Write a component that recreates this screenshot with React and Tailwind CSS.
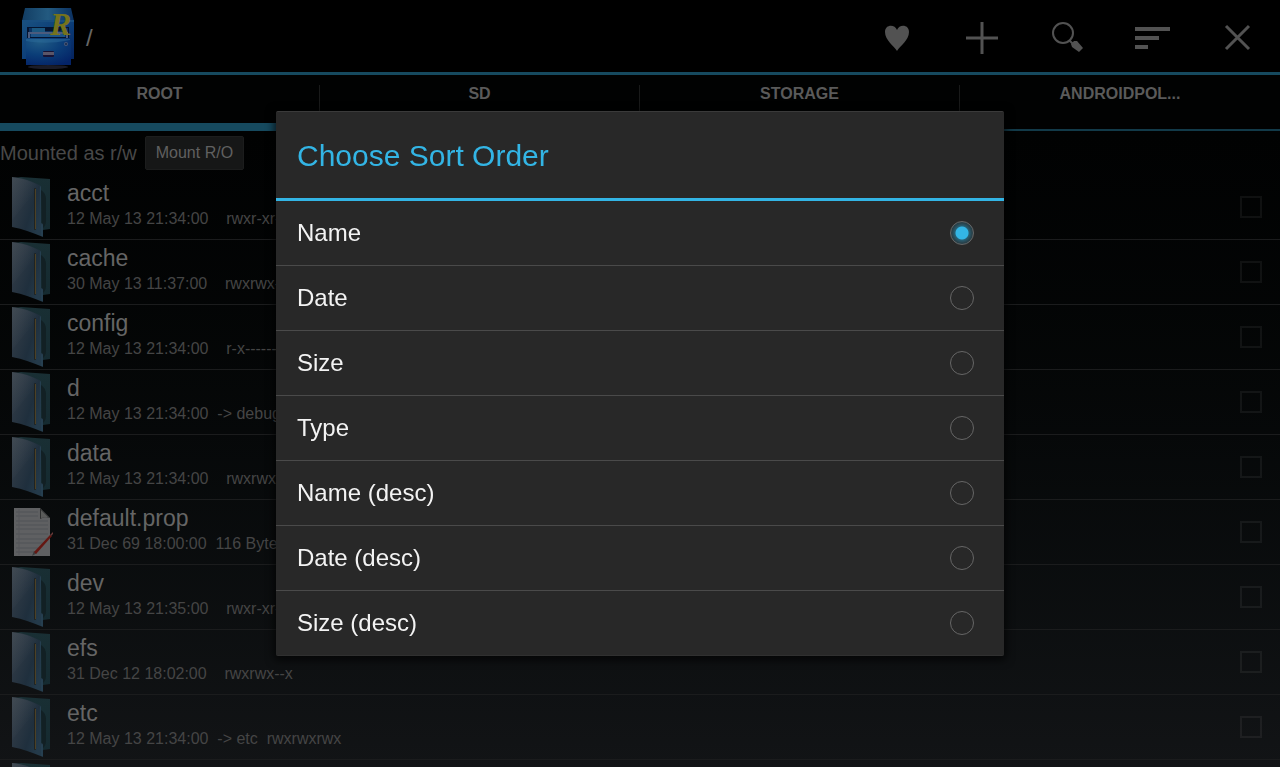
import { useState } from 'react';

const TABS = ['ROOT', 'SD', 'STORAGE', 'ANDROIDPOL...'];

const FILES = [
  { name: 'acct', info: '12 May 13 21:34:00    rwxr-xr-x' },
  { name: 'cache', info: '30 May 13 11:37:00    rwxrwx---' },
  { name: 'config', info: '12 May 13 21:34:00    r-x------' },
  { name: 'd', info: '12 May 13 21:34:00  -> debug' },
  { name: 'data', info: '12 May 13 21:34:00    rwxrwx--x' },
  { name: 'default.prop', info: '31 Dec 69 18:00:00  116 Bytes', isFile: true },
  { name: 'dev', info: '12 May 13 21:35:00    rwxr-xr-x' },
  { name: 'efs', info: '31 Dec 12 18:02:00    rwxrwx--x' },
  { name: 'etc', info: '12 May 13 21:34:00  -> etc  rwxrwxrwx' },
];

const SORT_OPTIONS = ['Name', 'Date', 'Size', 'Type', 'Name (desc)', 'Date (desc)', 'Size (desc)'];

function Logo() {
  return (
    <svg width="56" height="64" viewBox="0 0 56 64" className="shrink-0" aria-hidden="true">
      <defs>
        <linearGradient id="cab" x1="0" y1="0" x2="1" y2="1">
          <stop offset="0" stopColor="#1a5180" />
          <stop offset="0.5" stopColor="#0b3d78" />
          <stop offset="1" stopColor="#041f5a" />
        </linearGradient>
        <linearGradient id="cabTop" x1="0" y1="0" x2="1" y2="0">
          <stop offset="0" stopColor="#123d63" />
          <stop offset="0.5" stopColor="#235a80" />
          <stop offset="1" stopColor="#0b3060" />
        </linearGradient>
        <radialGradient id="drawer" cx="0.3" cy="0.1" r="1">
          <stop offset="0" stopColor="#205b85" />
          <stop offset="0.5" stopColor="#0b3e78" />
          <stop offset="1" stopColor="#042367" />
        </radialGradient>
      </defs>
      <ellipse cx="28" cy="61" rx="20" ry="2" fill="#1b1c28" />
      <path d="M5 2h46l3 13H2z" fill="url(#cabTop)" />
      <path d="M2 14h52v39h-3v6H6v-6H2z" fill="url(#cab)" />
      <path d="M2 14h52v2H2z" fill="#184e80" />
      <path d="M7 21h42v11H7z" fill="#05142f" />
      <path d="M9 22h5l2 3h24l3-3h5v9H9z" fill="#0a3263" />
      <path d="M12 22h13v4H12z" fill="#1b5780" />
      <path d="M8 26h40v6h-2v-4H10v4H8z" fill="#4b5b7d" />
      <path d="M11 28h34v3H11z" fill="#1d5386" />
      <path d="M6 33h44l1 3v23H6z" fill="url(#drawer)" />
      <path d="M6 35c12 2 24 3 44-1v-1H6z" fill="#2b6b9b" opacity="0.5" />
      <rect x="23" y="45" width="11" height="6" rx="1" fill="#171335" />
      <path d="M23 46h11v3H23z" fill="#5a5568" />
      <circle cx="46" cy="38" r="2" fill="#485776" />
      <circle cx="46" cy="38" r="1" fill="#16284a" />
      <text
        x="30"
        y="29"
        fontFamily="'Liberation Serif', serif"
        fontSize="32"
        fontWeight="bold"
        fontStyle="italic"
        fill="#76731c"
      >
        R
      </text>
    </svg>
  );
}

function FolderIcon() {
  return (
    <svg width="40" height="62" viewBox="0 0 40 62" className="shrink-0" aria-hidden="true">
      <defs>
        <linearGradient id="cover" x1="0" y1="0" x2="1" y2="0.6">
          <stop offset="0" stopColor="#343d46" />
          <stop offset="0.35" stopColor="#2b3743" />
          <stop offset="0.7" stopColor="#1f2f3d" />
          <stop offset="1" stopColor="#243a4a" />
        </linearGradient>
        <linearGradient id="back" x1="0" y1="0" x2="0" y2="1">
          <stop offset="0" stopColor="#192f34" />
          <stop offset="1" stopColor="#152a30" />
        </linearGradient>
        <linearGradient id="shine" x1="0" y1="0" x2="1" y2="1">
          <stop offset="0" stopColor="#59636b" stopOpacity="0.35" />
          <stop offset="0.6" stopColor="#59636b" stopOpacity="0" />
        </linearGradient>
      </defs>
      <path d="M2 2l8-1 29 2v50l-7 1-20-6z" fill="url(#back)" />
      <path d="M30 14c3 2 5 5 5 9v22c0 4-2 6-4 8z" fill="#122024" />
      <path d="M1 1c11 1 20 4 29 9v37l2 1v13C22 57 12 53 1 51z" fill="url(#cover)" />
      <path d="M1 1c10 1 19 4 28 9L1 44z" fill="url(#shine)" />
      <path d="M29 10l1 1v37l2 1v11h-2z" fill="#263f50" />
      <rect x="23" y="12" width="2" height="42" rx="1" fill="#1f2322" />
      <path d="M24 13h1v40h-1z" fill="#4c4126" />
    </svg>
  );
}

function TextFileIcon() {
  return (
    <svg width="40" height="62" viewBox="0 0 40 62" className="shrink-0" aria-hidden="true" overflow="visible">
      <path d="M3 7h26l10 10v38H3z" fill="#5f6062" />
      <path
        d="M5 11h22M5 15h22M5 20h32M5 24h32M5 28h32M5 33h32M5 38h32M5 42h28M5 47h22M5 51h18"
        stroke="#515257"
      />
      <path d="M8 8v46" stroke="#56575a" />
      <path d="M29 7l10 10c-3-1-6-1-10 1z" fill="#2d2e2e" />
      <path d="M30 9l7 7-7 1z" fill="#5a5b5a" />
      <path d="M21 55l2-5 3 2z" fill="#3c3c3e" />
      <path d="M23 51l16-17 2 1-16 18z" fill="#651712" />
      <path d="M39 34l3-3v2l-2 2z" fill="#6a3a38" />
    </svg>
  );
}

const ACTIONS = [
  {
    label: 'Favourites',
    icon: <path d="M20 33C17 28 8 22 8 14c0-8 10-8 12-2 2-6 12-6 12 2 0 8-9 14-12 19z" fill="#525252" />,
  },
  {
    label: 'Add',
    icon: <path d="M20 4v32M4 20h32" stroke="#525252" strokeWidth="3" />,
  },
  {
    label: 'Search',
    icon: (
      <>
        <circle cx="16" cy="15" r="10" fill="none" stroke="#525252" strokeWidth="2" />
        <path d="M22 22l4 4" stroke="#525252" strokeWidth="2" />
        <path d="M24 26l3-3 3 0 6 7-4 4-7-5z" fill="#525252" />
      </>
    ),
  },
  {
    label: 'Sort',
    icon: <path d="M3 11h35M3 20h24M3 29h13" stroke="#525252" strokeWidth="4" />,
  },
  {
    label: 'Close',
    icon: <path d="M9 8l23 23M32 8L9 31" stroke="#525252" strokeWidth="3" />,
  },
];

function Header() {
  return (
    <header className="flex h-[75px] shrink-0 items-center border-b-[3px] border-[#164a5f] bg-black">
      <div className="flex flex-1 items-center pt-1 pl-5">
        <Logo />
        <span className="pl-2.5 text-2xl text-[#666]">/</span>
      </div>
      {ACTIONS.map(({ label, icon }) => (
        <button
          key={label}
          type="button"
          aria-label={label}
          className="flex h-full w-[85px] items-center justify-center pt-1 pr-0.5"
        >
          <svg width="40" height="40" viewBox="0 0 40 40">
            {icon}
          </svg>
        </button>
      ))}
    </header>
  );
}

function TabBar() {
  return (
    <nav className="grid h-14 shrink-0 grid-cols-4 bg-[#010202]">
      {TABS.map((tab, i) => (
        <button
          key={tab}
          type="button"
          className={`flex flex-col pt-2.5 text-base leading-[18px] font-bold text-[#5a5a5a] ${
            i === 0 ? 'border-b-8 border-[#164a5f]' : 'border-b-2 border-[#123a49]'
          }`}
        >
          <span
            className={`flex h-[34px] w-full justify-center ${i < TABS.length - 1 ? 'border-r border-[#191a1a]' : ''}`}
          >
            {tab}
          </span>
        </button>
      ))}
    </nav>
  );
}

function FileRow({ file }) {
  return (
    <li className="flex h-[65px] shrink-0 items-center border-b border-[#1b1c1d] pr-[18px] pl-[11px]">
      {file.isFile ? <TextFileIcon /> : <FolderIcon />}
      <div className="min-w-0 flex-1 pb-1 pl-4">
        <div className="text-[23px] leading-7 text-[#656565]">{file.name}</div>
        <div className="truncate text-base leading-6 whitespace-pre text-[#454545]">{file.info}</div>
      </div>
      <input
        type="checkbox"
        aria-label={`Select ${file.name}`}
        className="size-[22px] appearance-none border-2 border-white/6 checked:bg-[#164a5f]"
      />
    </li>
  );
}

function SortDialog({ value, onChange }) {
  return (
    <div className="fixed inset-0 flex items-center justify-center">
      <div
        role="dialog"
        aria-labelledby="sort-title"
        className="w-[728px] max-w-full rounded-xs border-t border-b border-t-[#3a3a3a] border-b-[#303030] bg-[#282828] shadow-[0_2px_8px_2px_rgba(0,0,0,0.7)]"
      >
        <h2
          id="sort-title"
          className="flex h-[89px] items-center border-b-[3px] border-[#33b5e5] px-[21px] pt-px text-[30px] text-[#33b5e5]"
        >
          Choose Sort Order
        </h2>
        <div role="radiogroup" aria-labelledby="sort-title" className="divide-y divide-[#4a4a4a]">
          {SORT_OPTIONS.map((option, i) => (
            <label
              key={option}
              className={`flex items-center justify-between pr-[30px] pl-[21px] text-2xl text-[#f3f3f3] ${
                i === SORT_OPTIONS.length - 1 ? 'h-16' : 'h-[65px]'
              }`}
            >
              {option}
              <input
                type="radio"
                name="sort"
                checked={value === option}
                onChange={() => onChange(option)}
                className="size-6 appearance-none rounded-full border border-[#666] checked:bg-[radial-gradient(circle,#33b5e5_0,#33b5e5_6px,#285f73_7px,#29414a_10px)]"
              />
            </label>
          ))}
        </div>
      </div>
    </div>
  );
}

export default function App() {
  const [sort, setSort] = useState('Name');

  return (
    <div className="flex h-screen flex-col overflow-hidden bg-black font-['Liberation_Sans',Arial,sans-serif]">
      <Header />
      <TabBar />
      <main className="flex min-h-0 flex-1 flex-col overflow-hidden bg-linear-to-b from-[#010202] to-[#121416]">
        <div className="flex h-11 shrink-0 items-center gap-2 text-[20px] text-[#484848]">
          <span>Mounted as r/w</span>
          <button
            type="button"
            className="h-[34px] rounded-xs border border-[#1c1d1d] bg-[#161717] px-2.5 text-base text-[#606060]"
          >
            Mount R/O
          </button>
        </div>
        <ul className="flex flex-col">
          {FILES.map((file) => (
            <FileRow key={file.name} file={file} />
          ))}
          <li className="flex h-[65px] shrink-0 items-center pl-[11px]">
            <FolderIcon />
          </li>
        </ul>
      </main>
      <SortDialog value={sort} onChange={setSort} />
    </div>
  );
}
